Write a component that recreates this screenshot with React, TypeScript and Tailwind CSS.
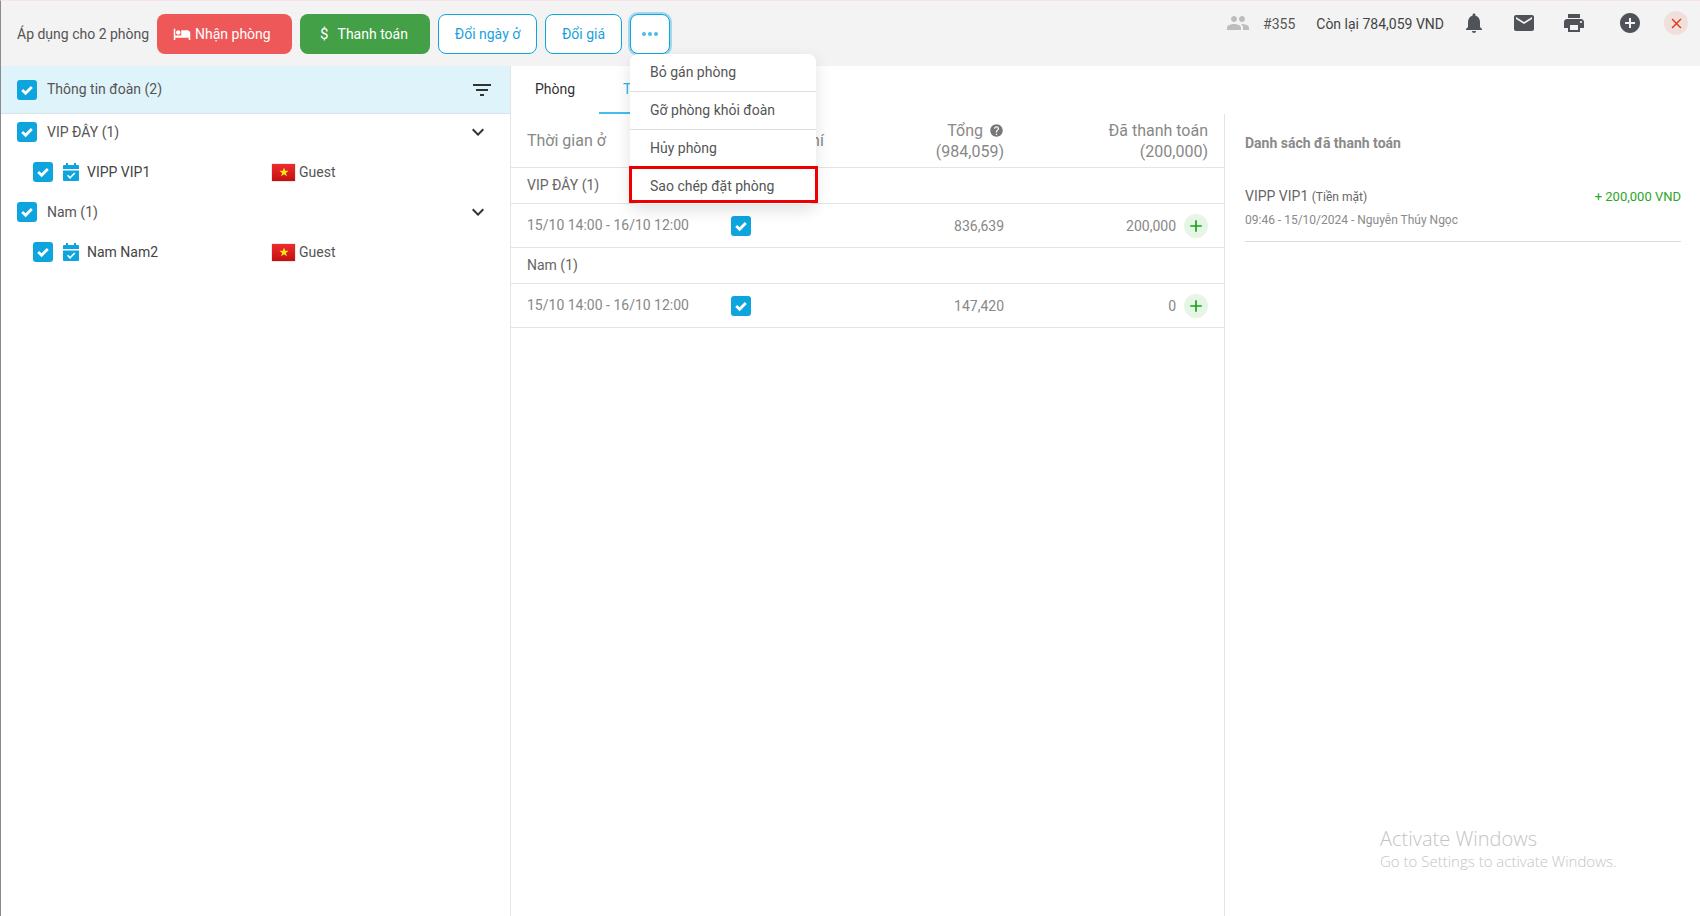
import React from "react";

const P = {
  hotel: "M7 13c1.66 0 3-1.34 3-3S8.66 7 7 7s-3 1.34-3 3 1.34 3 3 3zm12-6h-8v7H3V5H1v15h2v-3h18v3h2v-9c0-2.21-1.79-4-4-4z",
  people: "M16 11c1.66 0 2.99-1.34 2.99-3S17.66 5 16 5c-1.66 0-3 1.34-3 3s1.34 3 3 3zm-8 0c1.66 0 2.99-1.34 2.99-3S9.66 5 8 5C6.34 5 5 6.34 5 8s1.34 3 3 3zm0 2c-2.33 0-7 1.17-7 3.5V19h14v-2.5c0-2.33-4.67-3.5-7-3.5zm8 0c-.29 0-.62.02-.97.05 1.16.84 1.97 1.97 1.97 3.45V19h6v-2.5c0-2.33-4.67-3.5-7-3.5z",
  bell: "M12 22c1.1 0 2-.9 2-2h-4c0 1.1.89 2 2 2zm6-6v-5c0-3.07-1.64-5.64-4.5-6.32V4c0-.83-.67-1.5-1.5-1.5s-1.5.67-1.5 1.5v.68C7.63 5.36 6 7.92 6 11v5l-2 2v1h16v-1l-2-2z",
  mail: "M20 4H4c-1.1 0-1.99.9-1.99 2L2 18c0 1.1.9 2 2 2h16c1.1 0 2-.9 2-2V6c0-1.1-.9-2-2-2zm0 4l-8 5-8-5V6l8 5 8-5v2z",
  print: "M19 8H5c-1.66 0-3 1.34-3 3v6h4v4h12v-4h4v-6c0-1.66-1.34-3-3-3zm-3 11H8v-5h8v5zm3-7c-.55 0-1-.45-1-1s.45-1 1-1 1 .45 1 1-.45 1-1 1zm-1-9H6v4h12V3z",
  add: "M12 2C6.48 2 2 6.48 2 12s4.48 10 10 10 10-4.48 10-10S17.52 2 12 2zm5 11h-4v4h-2v-4H7v-2h4V7h2v4h4v2z",
  help: "M12 2C6.48 2 2 6.48 2 12s4.48 10 10 10 10-4.48 10-10S17.52 2 12 2zm1 17h-2v-2h2v2zm2.07-7.75l-.9.92C13.45 12.9 13 13.5 13 15h-2v-.5c0-1.1.45-2.1 1.17-2.83l1.24-1.26c.37-.36.59-.86.59-1.41 0-1.1-.9-2-2-2s-2 .9-2 2H8c0-2.21 1.79-4 4-4s4 1.79 4 4c0 .88-.36 1.68-.93 2.25z",
  filter: "M10 18h4v-2h-4v2zM3 6v2h18V6H3zm3 7h12v-2H6v2z",
  chevron: "M16.59 8.59L12 13.17 7.41 8.59 6 10l6 6 6-6z",
  close: "M19 6.41L17.59 5 12 10.59 6.41 5 5 6.41 10.59 12 5 17.59 6.41 19 12 13.41 17.59 19 19 17.59 13.41 12z",
  plus: "M19 13h-6v6h-2v-6H5v-2h6V5h2v6h6v2z",
};

function Icon({ d, className }: { d: string; className: string }) {
  return (
    <svg viewBox="0 0 24 24" fill="currentColor" className={className}>
      <path d={d} />
    </svg>
  );
}

function Check({ className = "" }: { className?: string }) {
  return (
    <span className={`flex h-5 w-5 shrink-0 items-center justify-center rounded-[3px] bg-[#0ea5df] ${className}`}>
      <svg viewBox="0 0 20 20" className="h-5 w-5" fill="none" stroke="#fff" strokeWidth="2.8">
        <path d="M5.2 10 8.6 13.2 14.8 7" />
      </svg>
    </span>
  );
}

function Calendar() {
  return (
    <svg viewBox="0 0 18 18" className="h-[18px] w-[18px] shrink-0 text-[#0ea5df]" fill="currentColor">
      <path d="M4 0h2v2h6V0h2v2h2a1 1 0 0 1 1 1v3H1V3a1 1 0 0 1 1-1h2zM1 7.5h16V17a1 1 0 0 1-1 1H2a1 1 0 0 1-1-1z" />
      <path d="M5.5 12.3 8 14.8 12.8 10" fill="none" stroke="#fff" strokeWidth="1.6" />
    </svg>
  );
}

function Flag() {
  return (
    <span className="flex h-[17px] w-[23px] shrink-0 items-center justify-center bg-gradient-to-b from-[#ee2b2b] to-[#c40e0e] shadow-[0_0_1px_rgba(0,0,0,0.5)]">
      <svg viewBox="0 0 10 10" className="h-[10px] w-[10px]" fill="#ffe81a">
        <path d="M5 .5 6.2 3.7 9.6 3.8 6.9 5.9 7.9 9.2 5 7.3 2.1 9.2 3.1 5.9.4 3.8 3.8 3.7z" />
      </svg>
    </span>
  );
}

function Group({ name }: { name: string }) {
  return (
    <div className="flex h-10 items-center pl-4 pr-5">
      <Check />
      <span className="ml-[10px] flex-1">{name}</span>
      <Icon d={P.chevron} className="h-6 w-6 text-[#333]" />
    </div>
  );
}

function Child({ name }: { name: string }) {
  return (
    <div className="flex h-10 items-center pl-8">
      <Check />
      <span className="ml-[9px]"><Calendar /></span>
      <span className="ml-[7px] w-[185px] text-[#444]">{name}</span>
      <Flag />
      <span className="ml-1 text-[#555]">Guest</span>
    </div>
  );
}

function TableGroup({ name }: { name: string }) {
  return (
    <div className="flex h-9 items-center border-b border-[#e4e4e4] pl-4 text-[#666]">{name}</div>
  );
}

function TableRow({ total, paid }: { total: string; paid: string }) {
  return (
    <div className="flex h-11 items-center border-b border-[#e4e4e4] pl-4 pr-4 text-[#888]">
      <span className="w-[204px]">15/10 14:00 - 16/10 12:00</span>
      <Check />
      <span className="w-[253px] pt-px text-right">{total}</span>
      <span className="flex-1 pt-px text-right">{paid}</span>
      <span className="ml-2 flex h-6 w-6 items-center justify-center rounded-full bg-[#e6f5e6]">
        <Icon d={P.plus} className="h-[20px] w-[20px] text-[#17a317]" />
      </span>
    </div>
  );
}

function MenuItem({ label, last = false, plain = false }: { label: string; last?: boolean; plain?: boolean }) {
  return (
    <div className={`flex items-center pl-5 text-[#555] ${last ? "h-9" : "h-[38px] border-b"} ${plain ? "border-transparent" : "border-[#dedede]"}`}>{label}</div>
  );
}

export default function App() {
  return (
    <div className="relative flex h-[916px] w-[1700px] flex-col overflow-hidden border-t border-[#f6e4ea] border-l border-l-[#8a8a8a] bg-white font-['Roboto',sans-serif] text-[14px] text-[#555]">
      {/* top bar */}
      <header className="flex h-[65px] shrink-0 items-start bg-[#f3f3f3]">
        <div className="flex items-center pl-4 pt-[13px]">
          <span className="w-[140px] text-[#555]">Áp dụng cho 2 phòng</span>
          <button className="flex h-10 w-[135px] items-center gap-1 rounded-lg bg-[#ee5858] pl-4 text-white">
            <Icon d={P.hotel} className="h-[18px] w-[18px]" />
            Nhận phòng
          </button>
          <button className="ml-2 flex h-10 w-[130px] items-center justify-center gap-[9px] rounded-lg bg-[#43a047] pr-[2px] text-white">
            <span className="text-[15px]">$</span>
            Thanh toán
          </button>
          <button className="ml-2 h-10 w-[99px] rounded-lg border border-[#0ea5df] bg-white text-[#1b9fdc]">Đổi ngày ở</button>
          <button className="ml-2 h-10 w-[77px] rounded-lg border border-[#0ea5df] bg-white text-[#1b9fdc]">Đổi giá</button>
          <button className="ml-2 flex h-10 w-10 items-center justify-center gap-[2px] rounded-lg border border-[#0ea5df] bg-white shadow-[0_0_0_2px_rgba(14,165,223,0.35)]">
            <span className="h-[4px] w-[4px] rounded-full bg-[#4cbbe8]" />
            <span className="h-[4px] w-[4px] rounded-full bg-[#4cbbe8]" />
            <span className="h-[4px] w-[4px] rounded-full bg-[#4cbbe8]" />
          </button>
        </div>
        <div className="ml-auto flex items-center pt-[10px] pr-[12px]">
          <Icon d={P.people} className="h-6 w-6 text-[#bdbdbd]" />
          <span className="ml-[13px] pt-[2px] text-[#555]">#355</span>
          <span className="ml-[21px] pt-[2px] text-[#444]">Còn lại 784,059 VND</span>
          <Icon d={P.bell} className="ml-[18px] h-6 w-6 text-[#50525a]" />
          <Icon d={P.mail} className="ml-[26px] h-6 w-6 text-[#50525a]" />
          <Icon d={P.print} className="ml-[26px] h-6 w-6 text-[#50525a]" />
          <Icon d={P.add} className="ml-[32px] h-6 w-6 text-[#50525a]" />
          <span className="ml-[22px] flex h-6 w-6 items-center justify-center rounded-full bg-[#f1dfdb]">
            <Icon d={P.close} className="h-[17px] w-[17px] text-[#e0391b]" />
          </span>
        </div>
      </header>

      <div className="flex min-h-0 flex-1">
        {/* left panel */}
        <aside className="w-[510px] shrink-0 border-r border-[#e4e4e4]">
          <div className="flex h-[48px] items-center border-b border-[#d9e4ea] bg-[#dff3fb] pl-4 pr-4">
            <Check />
            <span className="ml-[10px] flex-1">Thông tin đoàn (2)</span>
            <Icon d={P.filter} className="h-6 w-6 text-[#333]" />
          </div>
          <div className="-mt-[2px] text-[#555]">
            <Group name="VIP ĐÂY (1)" />
            <Child name="VIPP VIP1" />
            <Group name="Nam (1)" />
            <Child name="Nam Nam2" />
          </div>
        </aside>

        {/* main */}
        <main className="min-w-0 flex-1">
          <nav className="flex h-[48px] items-stretch">
            <span className="flex w-[88px] items-center justify-center pb-[2px] text-[#333]">Phòng</span>
            <span className="relative flex w-[88px] items-center whitespace-nowrap pb-[2px] pl-6 text-[#29b6f0]">
              Thanh toán
              <span className="absolute bottom-0 left-0 h-[2px] w-full bg-[#41bdf0]" />
            </span>
          </nav>
          <div className="flex h-[calc(100%-48px)]">
            <section className="w-[714px] shrink-0 border-r border-[#e4e4e4]">
              <div className="flex h-[54px] items-center border-b border-[#e4e4e4] px-4 text-[16px] leading-[21px] text-[#888]">
                <span className="w-[205px]">Thời gian ở</span>
                <span className="w-[100px] whitespace-nowrap pl-[35px]">Tính phí</span>
                <span className="w-[172px] pt-px text-right">
                  <span className="flex items-center justify-end gap-[6px]">
                    Tổng
                    <Icon d={P.help} className="h-[15px] w-[15px] text-[#777]" />
                  </span>
                  (984,059)
                </span>
                <span className="flex-1 text-right">Đã thanh toán<br />(200,000)</span>
              </div>
              <TableGroup name="VIP ĐÂY (1)" />
              <TableRow total="836,639" paid="200,000" />
              <TableGroup name="Nam (1)" />
              <TableRow total="147,420" paid="0" />
            </section>
            <section className="flex-1 pl-5 pr-[19px]">
              <h2 className="pt-[19px] text-[14px] leading-[20px] font-bold text-[#8a8a8a]">Danh sách đã thanh toán</h2>
              <div className="mt-[30px] border-b border-[#dcdcdc] pb-[11px]">
                <div className="flex items-center justify-between pt-px leading-[24px]">
                  <span className="text-[#666]">VIPP VIP1 <span className="text-[12px]">(Tiền mặt)</span></span>
                  <span className="text-[13px] text-[#2aa52a]">+ 200,000 VND</span>
                </div>
                <div className="mt-[1px] text-[12px] leading-[20px] text-[#8a8a8a]">09:46 - 15/10/2024 - Nguyễn Thúy Ngọc</div>
              </div>
            </section>
          </div>
        </main>
      </div>

      {/* dropdown */}
      <div className="absolute left-[629px] top-[53px] w-[186px] rounded-lg bg-white shadow-[0_6px_16px_rgba(0,0,0,0.12)]">
        <MenuItem label="Bỏ gán phòng" />
        <MenuItem label="Gỡ phòng khỏi đoàn" />
        <MenuItem label="Hủy phòng" plain />
        <MenuItem label="Sao chép đặt phòng" last />
      </div>
      <div className="absolute left-[628px] top-[165px] h-[37px] w-[189px] border-[3px] border-[#ee0000]" />

      {/* left edge artifact */}
      <div className="absolute -left-px top-[433px] h-[19px] w-px bg-[#b3262a]" />

      {/* watermark */}
      <div className="pointer-events-none absolute left-[1379px] top-[824px] font-['Open_Sans',sans-serif] font-light text-[#c4c4c4]">
        <div className="text-[20px] leading-[27px]">Activate Windows</div>
        <div className="text-[15px] leading-[19px]">Go to Settings to activate Windows.</div>
      </div>
    </div>
  );
}
